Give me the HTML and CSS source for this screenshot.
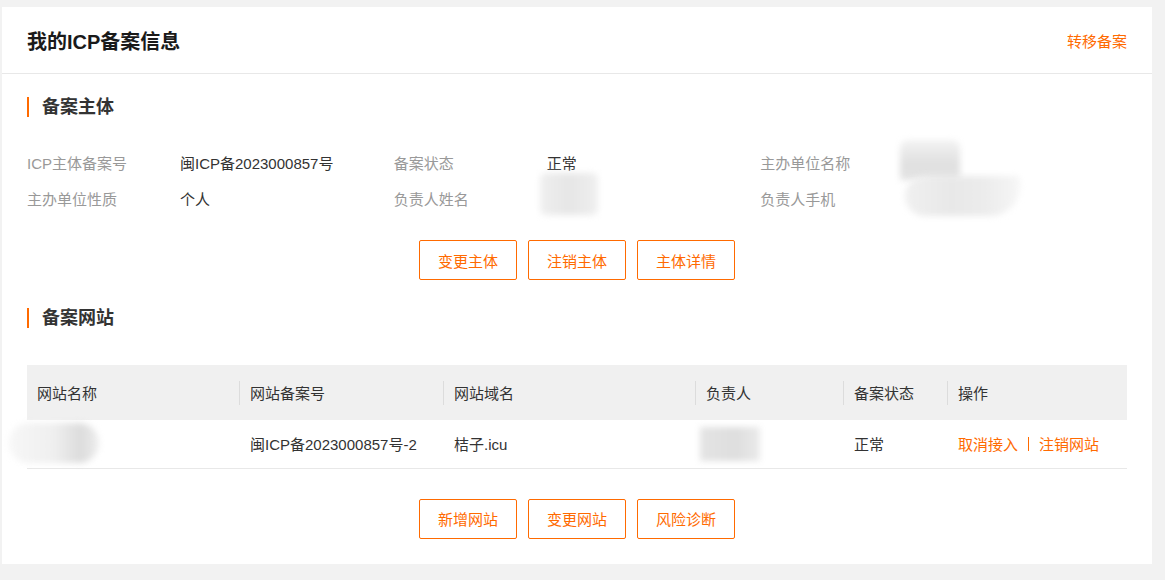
FILE: index.html
```html
<!DOCTYPE html>
<html lang="zh-CN">
<head>
    <meta charset="UTF-8">
    <title>我的ICP备案信息</title>
    <link rel="stylesheet" href="styles.css">
</head>
<body>
<div id="card">
    <div id="header">
        <span class="page-title">我的ICP备案信息</span>
        <a class="link">转移备案</a>
    </div>

    <div class="section">
        <div class="section-title">备案主体</div>
        <div class="info">
            <div class="item"><span class="label">ICP主体备案号</span><span class="value">闽ICP备2023000857号</span></div>
            <div class="item"><span class="label">备案状态</span><span class="value">正常</span></div>
            <div class="item"><span class="label">主办单位名称</span><span class="value"><i class="mask mask-org"></i></span></div>
            <div class="item"><span class="label">主办单位性质</span><span class="value">个人</span></div>
            <div class="item"><span class="label">负责人姓名</span><span class="value"><i class="mask mask-name"></i></span></div>
            <div class="item"><span class="label">负责人手机</span><span class="value"><i class="mask mask-phone"></i></span></div>
        </div>
        <div class="buttons">
            <button class="btn">变更主体</button>
            <button class="btn">注销主体</button>
            <button class="btn">主体详情</button>
        </div>

        <div class="section-title second">备案网站</div>
        <table class="sites">
            <thead>
                <tr>
                    <th class="c1">网站名称</th>
                    <th class="c2">网站备案号</th>
                    <th class="c3">网站域名</th>
                    <th class="c4">负责人</th>
                    <th class="c5">备案状态</th>
                    <th class="c6">操作</th>
                </tr>
            </thead>
            <tbody>
                <tr>
                    <td><span class="site-name">Cc<i class="mask mask-site"></i></span></td>
                    <td>闽ICP备2023000857号-2</td>
                    <td>桔子.icu</td>
                    <td><i class="mask mask-owner"></i></td>
                    <td>正常</td>
                    <td><a class="link">取消接入</a><span class="sep"></span><a class="link">注销网站</a></td>
                </tr>
            </tbody>
        </table>
        <div class="buttons">
            <button class="btn">新增网站</button>
            <button class="btn">变更网站</button>
            <button class="btn">风险诊断</button>
        </div>
    </div>
</div>
</body>
</html>
```

FILE: styles.css
```css
html, body {
    margin: 0;
    background: #f2f2f2;
}
body {
    padding: 7px 13px 17px 2px;
    font-family: "Microsoft YaHei", "Liberation Sans", "Noto Sans CJK SC", sans-serif;
    font-size: 15px;
    color: #333;
}
#card {
    background: #fff;
    width: 1150px;
}
#header {
    height: 66px;
    padding: 0 25px;
    display: flex;
    align-items: center;
    justify-content: space-between;
    border-bottom: 1px solid #e8e8e8;
}
.page-title {
    font-size: 20px;
    font-weight: bold;
    color: #1a1a1a;
}
.link {
    color: #ff6a00;
    cursor: pointer;
}
.section {
    padding: 23px 25px 25px;
}
.section-title {
    height: 20px;
    line-height: 20px;
    font-size: 18px;
    font-weight: bold;
    color: #333;
    border-left: 2px solid #ff6a00;
    padding-left: 13px;
}
.section-title.second {
    margin-top: 28px;
}
.info {
    margin-top: 27px;
    display: grid;
    grid-template-columns: repeat(3, 1fr);
}
.item {
    height: 36px;
    display: flex;
    align-items: center;
}
.item .label {
    width: 153px;
    color: #999;
}
.item .value {
    color: #333;
}
.buttons {
    margin-top: 24px;
    display: flex;
    justify-content: center;
    gap: 11px;
}
.sites + .buttons {
    margin-top: 30px;
}
.btn {
    width: 98px;
    height: 40px;
    background: #fff;
    border: 1px solid #ff6a00;
    border-radius: 2px;
    color: #ff6a00;
    font-family: inherit;
    font-size: 15px;
    padding: 0;
    cursor: pointer;
}
.sites {
    margin-top: 37px;
    width: 100%;
    border-collapse: collapse;
    table-layout: fixed;
}
.sites th,
.sites td {
    box-sizing: border-box;
    padding: 0 0 0 11px;
    text-align: left;
    white-space: nowrap;
}
.sites th {
    height: 55px;
    background: #f0f0f0 linear-gradient(#dcdcdc, #dcdcdc) no-repeat left center / 1px 24px;
    font-weight: normal;
    color: #333;
}
.sites th.c1 {
    background-image: none;
}
.sites th:first-child,
.sites td:first-child {
    padding-left: 10px;
}
.sites .c1 { width: 212px; }
.sites .c2 { width: 204px; }
.sites .c3 { width: 252px; }
.sites .c4 { width: 148px; }
.sites .c5 { width: 104px; }
.sites td {
    height: 48px;
    border-bottom: 1px solid #e8e8e8;
    color: #333;
}
.sep {
    display: inline-block;
    width: 1px;
    height: 14px;
    background: #ff6a00;
    margin: 0 10px;
    vertical-align: -1px;
}
.site-name {
    position: relative;
    color: #999;
}
.mask {
    display: inline-block;
    vertical-align: middle;
    background: #e6e6e6;
    filter: blur(3px);
}
.mask-org {
    width: 60px;
    height: 40px;
    margin-left: -13px;
    transform: translateY(-2px);
    background: linear-gradient(180deg, #f3f3f3, #e0e0e0 60%, #e4e4e4);
    border-radius: 8px 8px 0 0;
}
.mask-phone {
    width: 115px;
    height: 40px;
    margin-left: -8px;
    transform: translateY(-2px);
    background: linear-gradient(90deg, #f0f0f0, #e8e8e8 40%, #ececec 70%, #f6f6f6);
    border-radius: 20px 4px 30px 20px;
}
.mask-name {
    width: 58px;
    height: 42px;
    margin-left: -7px;
    transform: translateY(-4px);
    background: linear-gradient(90deg, #efefef, #e6e6e6 50%, #efefef);
    border-radius: 6px;
}
.mask-site {
    position: absolute;
    left: -28px;
    top: -12px;
    width: 90px;
    height: 40px;
    background: linear-gradient(90deg, #f7f7f7, #efefef 50%, #dcdcdc 80%, #eeeeee);
    border-radius: 20px;
}
.mask-owner {
    width: 60px;
    height: 34px;
    margin-left: -6px;
    background: linear-gradient(90deg, #e4e4e4, #dedede 60%, #eaeaea);
}
```
